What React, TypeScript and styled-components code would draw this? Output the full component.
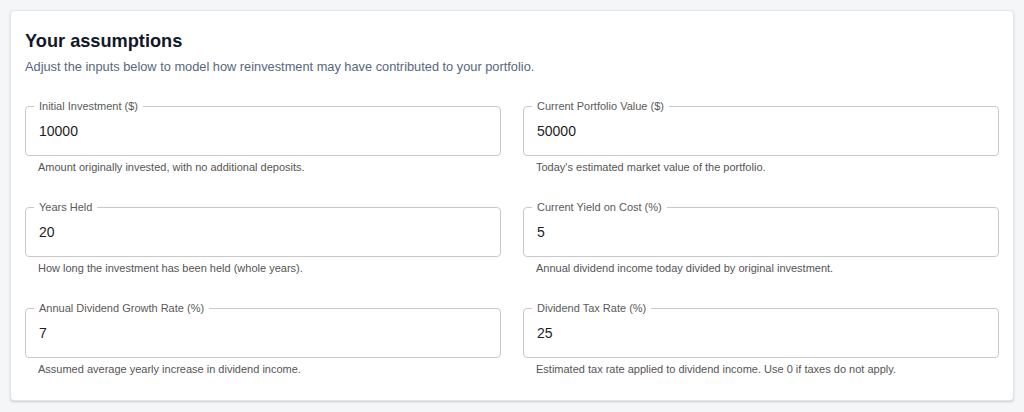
import React from "react";
import styled, { createGlobalStyle } from "styled-components";

const Global = createGlobalStyle`
  html, body { margin: 0; padding: 0; background: #f4f6f8; }
  body { font-family: "Liberation Sans", Arial, sans-serif; }
  * { box-sizing: border-box; }
`;

const Page = styled.div`
  padding: 10px;
  background: #f4f6f8;
  width: 1024px;
  height: 412px;
`;

const Card = styled.section`
  background: #ffffff;
  border: 1px solid #e3e6ea;
  border-radius: 4px;
  box-shadow: 0 1px 2px rgba(0, 0, 0, 0.18);
  padding: 18px 14px 24px 14px;
`;

const Title = styled.h2`
  margin: 0;
  font-size: 18.2px;
  line-height: 24px;
  font-weight: 700;
  color: #111827;
`;

const Subtitle = styled.p`
  margin: 5px 0 0 0;
  font-size: 12.8px;
  line-height: 18px;
  color: #56677e;
`;

const Grid = styled.div`
  margin-top: 30px;
  display: grid;
  grid-template-columns: 1fr 1fr;
  column-gap: 22px;
  row-gap: 33px;
`;

const FieldCell = styled.div`
  display: flex;
  flex-direction: column;
`;

const Outline = styled.div`
  position: relative;
  height: 50px;
  border: 1px solid #c9c9c9;
  border-radius: 4px;
  display: flex;
  align-items: center;
  padding: 0 13px;
`;

const FloatLabel = styled.label`
  position: absolute;
  top: -7px;
  left: 8px;
  padding: 0 5px;
  background: #ffffff;
  font-size: 11px;
  line-height: 13px;
  color: #5a5a5a;
  white-space: nowrap;
`;

const Value = styled.input`
  border: none;
  outline: none;
  padding: 0;
  margin: 0;
  width: 100%;
  background: transparent;
  font-family: "Liberation Sans", Arial, sans-serif;
  font-size: 14px;
  line-height: 18px;
  color: #1d1d1d;
`;

const Helper = styled.div`
  margin-top: 4px;
  padding-left: 13px;
  font-size: 11px;
  line-height: 14px;
  color: #555555;
`;

const fields = [
  { label: "Initial Investment ($)", value: "10000", help: "Amount originally invested, with no additional deposits." },
  { label: "Current Portfolio Value ($)", value: "50000", help: "Today's estimated market value of the portfolio." },
  { label: "Years Held", value: "20", help: "How long the investment has been held (whole years)." },
  { label: "Current Yield on Cost (%)", value: "5", help: "Annual dividend income today divided by original investment." },
  { label: "Annual Dividend Growth Rate (%)", value: "7", help: "Assumed average yearly increase in dividend income." },
  { label: "Dividend Tax Rate (%)", value: "25", help: "Estimated tax rate applied to dividend income. Use 0 if taxes do not apply." },
];

export default function App() {
  return (
    <Page>
      <Global />
      <Card>
        <Title>Your assumptions</Title>
        <Subtitle>Adjust the inputs below to model how reinvestment may have contributed to your portfolio.</Subtitle>
        <Grid>
          {fields.map((f) => (
            <FieldCell key={f.label}>
              <Outline>
                <FloatLabel>{f.label}</FloatLabel>
                <Value defaultValue={f.value} />
              </Outline>
              <Helper>{f.help}</Helper>
            </FieldCell>
          ))}
        </Grid>
      </Card>
    </Page>
  );
}
